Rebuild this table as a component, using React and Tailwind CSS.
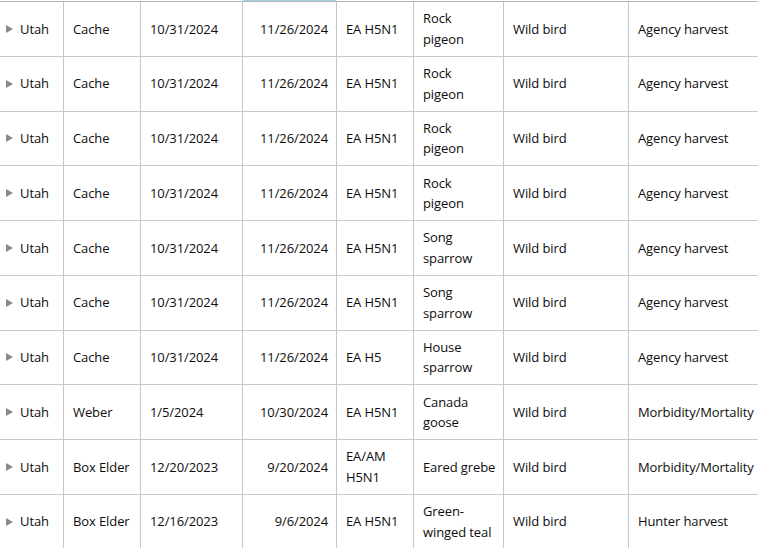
import React from "react";

const rows = [
  ["Cache", "10/31/2024", "11/26/2024", ["EA H5N1"], ["Rock", "pigeon"], "Wild bird", "Agency harvest"],
  ["Cache", "10/31/2024", "11/26/2024", ["EA H5N1"], ["Rock", "pigeon"], "Wild bird", "Agency harvest"],
  ["Cache", "10/31/2024", "11/26/2024", ["EA H5N1"], ["Rock", "pigeon"], "Wild bird", "Agency harvest"],
  ["Cache", "10/31/2024", "11/26/2024", ["EA H5N1"], ["Rock", "pigeon"], "Wild bird", "Agency harvest"],
  ["Cache", "10/31/2024", "11/26/2024", ["EA H5N1"], ["Song", "sparrow"], "Wild bird", "Agency harvest"],
  ["Cache", "10/31/2024", "11/26/2024", ["EA H5N1"], ["Song", "sparrow"], "Wild bird", "Agency harvest"],
  ["Cache", "10/31/2024", "11/26/2024", ["EA H5"], ["House", "sparrow"], "Wild bird", "Agency harvest"],
  ["Weber", "1/5/2024", "10/30/2024", ["EA H5N1"], ["Canada", "goose"], "Wild bird", "Morbidity/Mortality"],
  ["Box Elder", "12/20/2023", "9/20/2024", ["EA/AM", "H5N1"], ["Eared grebe"], "Wild bird", "Morbidity/Mortality"],
  ["Box Elder", "12/16/2023", "9/6/2024", ["EA H5N1"], ["Green-", "winged teal"], "Wild bird", "Hunter harvest"],
];

function Lines({ lines }) {
  return (
    <div className="flex flex-col">
      {lines.map((l, i) => (
        <span key={i} className="whitespace-nowrap">{l}</span>
      ))}
    </div>
  );
}

export default function App() {
  return (
    <div
      className="w-[758px] h-[548px] overflow-hidden bg-white text-[13px] leading-[20.5px] text-[#0d0d0d] tracking-[-0.1px]"
      style={{ fontFamily: '"Open Sans", sans-serif' }}
    >
      <div className="flex h-px">
        <div className="w-[243px] shrink-0" />
        <div className="w-[93px] shrink-0 bg-[#9fd2e6]" />
      </div>
      <div className="border-t border-[#b8b8b8]">
        {rows.map((r, i) => (
          <div key={i} className="flex h-[54.75px] border-b border-[#c8c8c8]">
            <div className="w-[64px] shrink-0 border-r border-[#c8c8c8] flex items-center pl-[6px] gap-[7px]">
              <svg width="7" height="8" viewBox="0 0 7 8">
                <polygon points="0,0 7,4 0,8" fill="#8a8a8a" />
              </svg>
              <span>Utah</span>
            </div>
            <div className="w-[77px] shrink-0 border-r border-[#c8c8c8] flex items-center pl-[9px] whitespace-nowrap">
              {r[0]}
            </div>
            <div className="w-[102px] shrink-0 border-r border-[#c8c8c8] flex items-center pl-[9px]">
              {r[1]}
            </div>
            <div className="w-[94px] shrink-0 border-r border-[#c8c8c8] flex items-center justify-end pr-[8px]">
              {r[2]}
            </div>
            <div className="w-[77px] shrink-0 border-r border-[#c8c8c8] flex items-center pl-[9px]">
              <Lines lines={r[3]} />
            </div>
            <div className="w-[90px] shrink-0 border-r border-[#c8c8c8] flex items-center pl-[9px]">
              <Lines lines={r[4]} />
            </div>
            <div className="w-[125px] shrink-0 border-r border-[#c8c8c8] flex items-center pl-[9px]">
              {r[5]}
            </div>
            <div className="w-[200px] shrink-0 flex items-center pl-[9px] whitespace-nowrap">
              {r[6]}
            </div>
          </div>
        ))}
      </div>
    </div>
  );
}
